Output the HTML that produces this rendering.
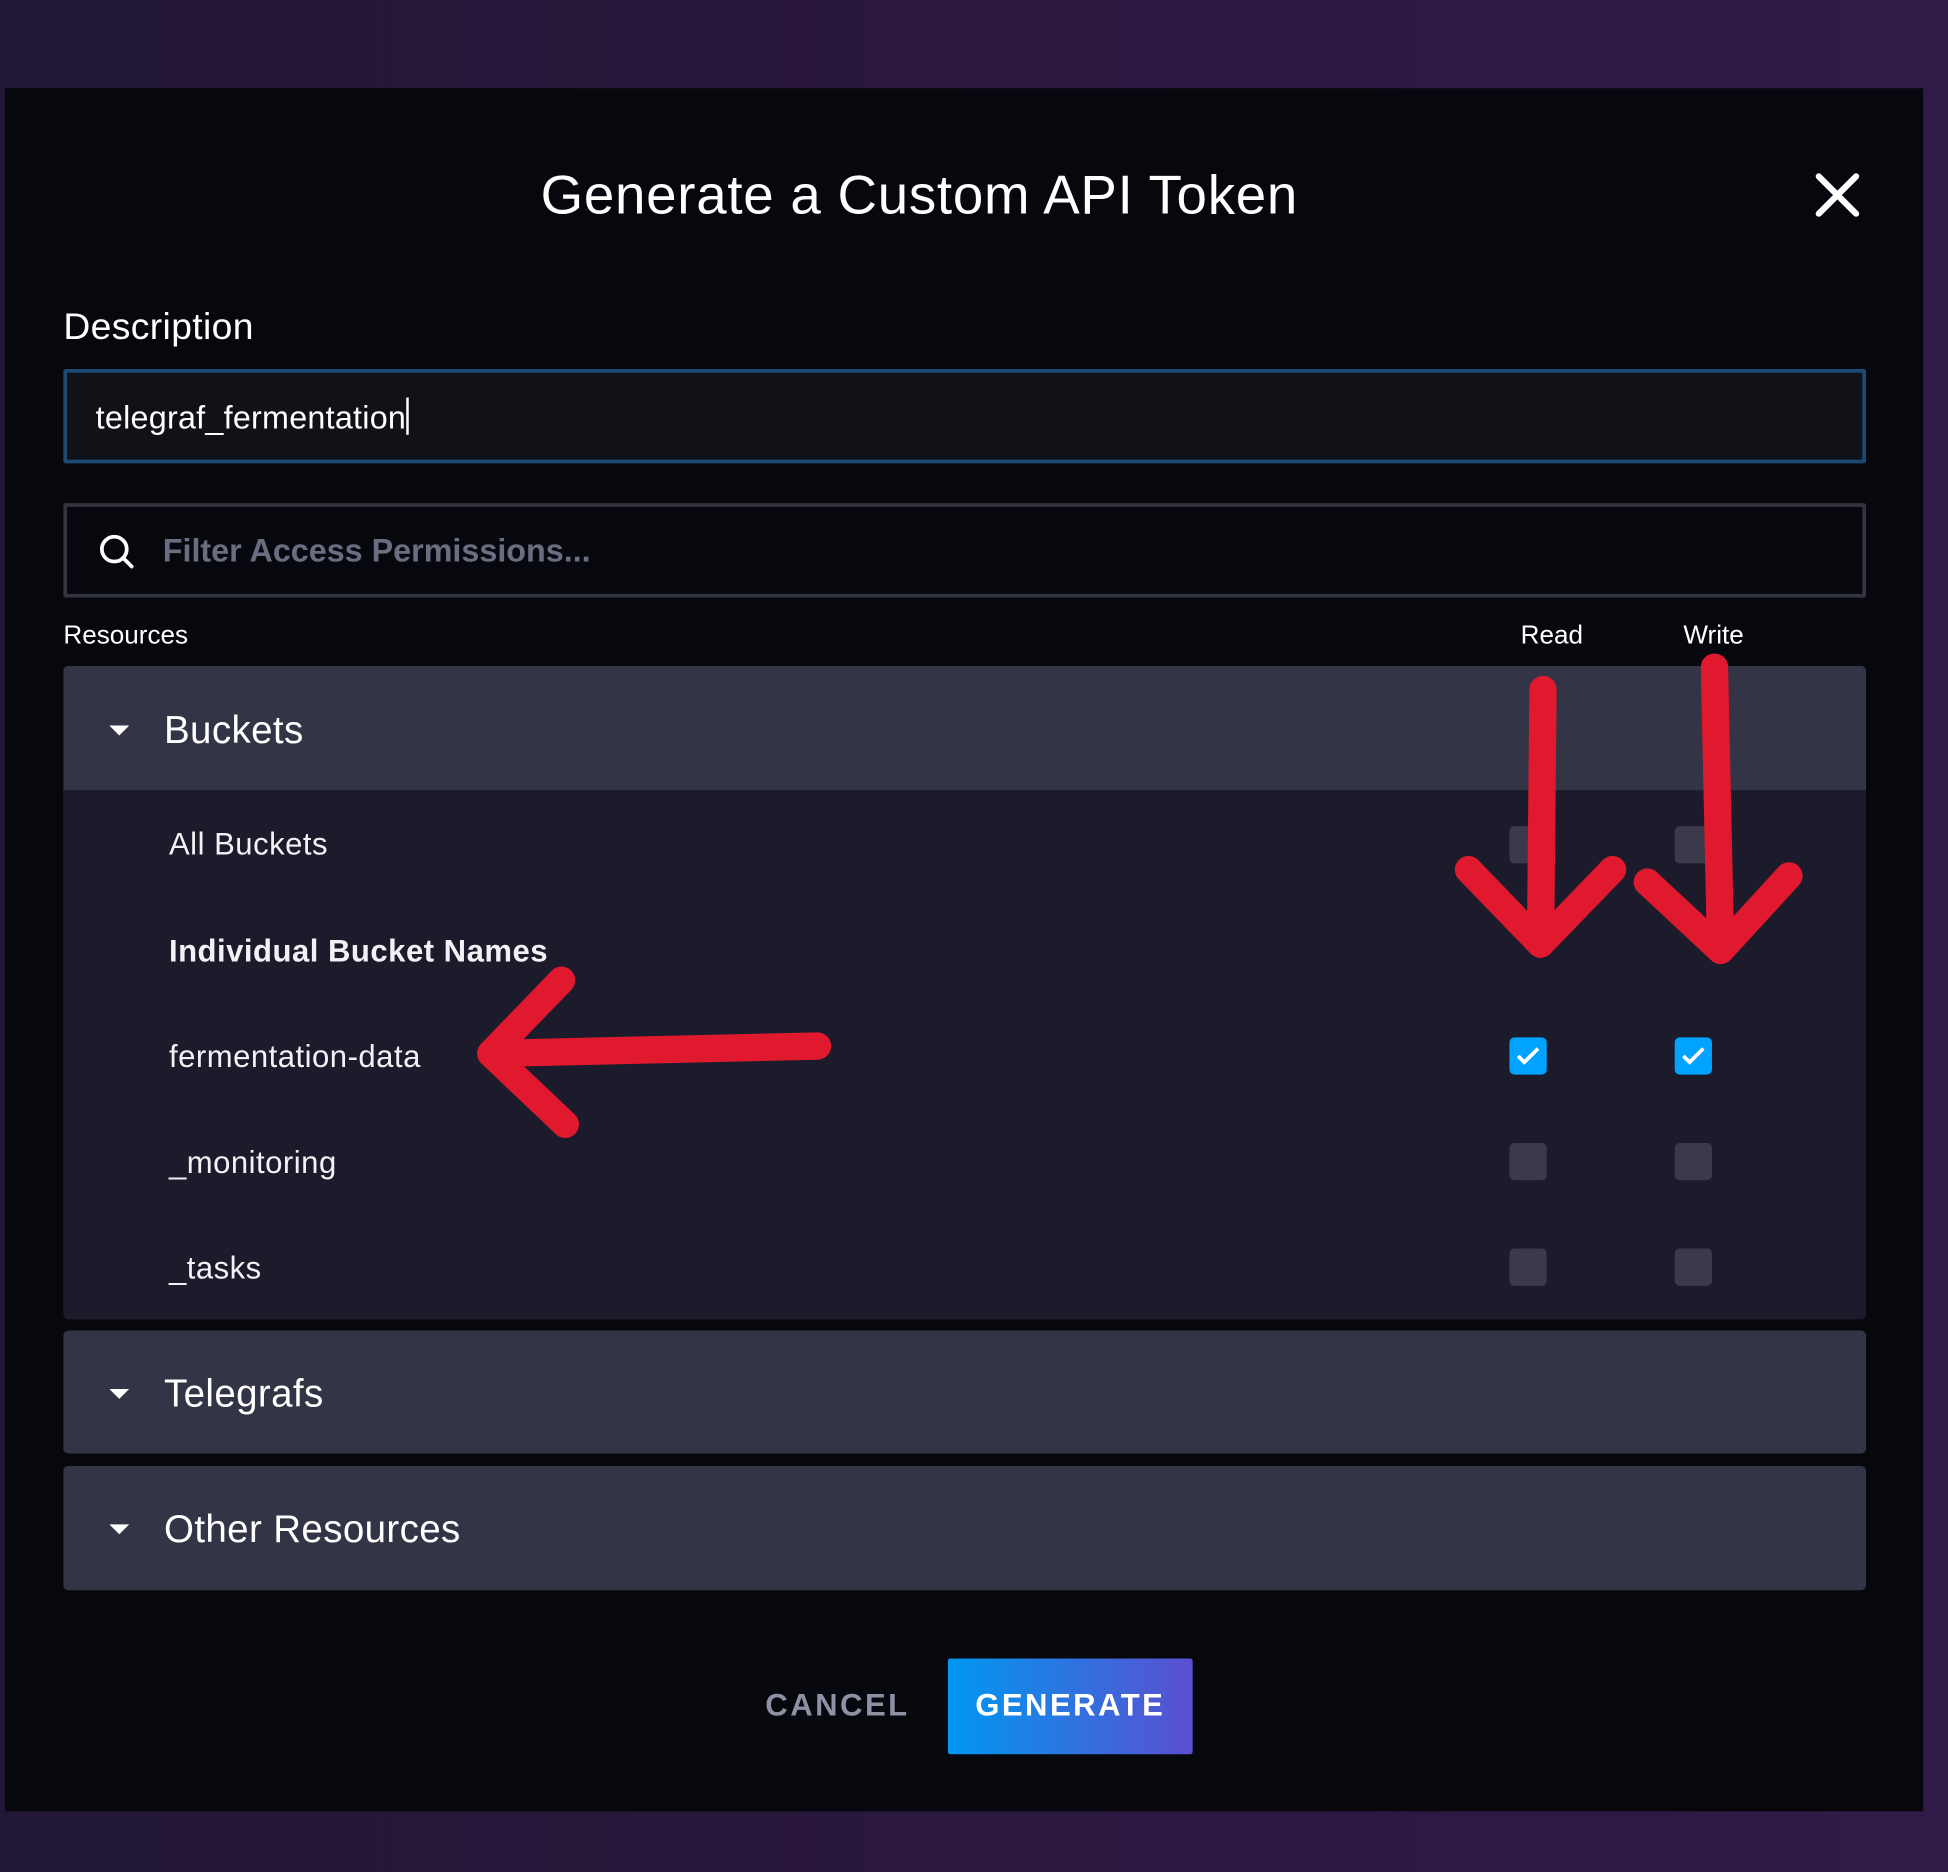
<!DOCTYPE html>
<html><head><style>
html,body{margin:0;padding:0;width:1948px;height:1872px;overflow:hidden;background:#241634;}
#w{position:absolute;left:0;top:0;width:1568px;height:1507px;transform:scale(1.24235);transform-origin:0 0;font-family:"Liberation Sans",sans-serif;color:#fff;
background:linear-gradient(90deg,#221735 0%,#2c1840 60%,#301a48 100%);}
.a{position:absolute;}
.modal{left:4px;top:71px;width:1544px;height:1387px;background:#07080d;}
.cb{position:absolute;width:30px;height:30px;border-radius:4px;background:#3a3a4a;}
.cb.on{background:#00a3ff;}
.row{position:absolute;left:136px;font-size:25px;color:#f2f2f6;letter-spacing:0.4px;}
.panel{position:absolute;left:51px;width:1451px;background:#333445;border-radius:4px;}
.tri{position:absolute;left:88px;width:0;height:0;border-left:8px solid transparent;border-right:8px solid transparent;border-top:8px solid #fff;}
.ph{position:absolute;left:132px;font-size:31px;letter-spacing:0.3px;}
</style></head><body><div id="w">
<div class="a modal"></div>
<div class="a" style="left:0;top:160px;width:1480px;text-align:center;font-size:44px;line-height:1;letter-spacing:0.6px;transform:translateY(-24px);">Generate a Custom API Token</div>
<svg class="a" style="left:1460px;top:138px" width="38" height="38"><path d="M4 4L34 34M34 4L4 34" stroke="#fff" stroke-width="5" stroke-linecap="round"/></svg>
<div class="a" style="left:51px;top:247px;font-size:30px;letter-spacing:0.3px;">Description</div>
<div class="a" style="left:51px;top:297px;width:1445px;height:70px;border:3px solid #1d4a72;background:#111217;border-radius:2px;"></div>
<div class="a" style="left:77px;top:320px;font-size:26px;letter-spacing:0.2px;">telegraf_fermentation<span style="display:inline-block;width:2px;height:30px;background:#fff;vertical-align:-5px;"></span></div>
<div class="a" style="left:51px;top:405px;width:1445px;height:70px;border:3px solid #33343f;background:#07080d;border-radius:2px;"></div>
<svg class="a" style="left:78px;top:428px" width="32" height="32"><circle cx="14" cy="14" r="10" fill="none" stroke="#fff" stroke-width="3"/><path d="M21 21L28 28" stroke="#fff" stroke-width="3" stroke-linecap="round"/></svg>
<div class="a" style="left:131px;top:428px;font-size:26px;font-weight:bold;color:#6b6d80;">Filter Access Permissions...</div>
<div class="a" style="left:51px;top:500px;font-size:21px;">Resources</div>
<div class="a" style="left:1224px;top:500px;font-size:21px;">Read</div>
<div class="a" style="left:1355px;top:500px;font-size:21px;">Write</div>
<div class="panel" style="top:536px;height:526px;background:#1c1b2b;overflow:hidden;"><div style="height:100px;background:#333445;"></div></div>
<div class="tri" style="top:584px"></div><div class="ph" style="top:570px">Buckets</div>
<div class="row" style="top:666px">All Buckets</div>
<div class="row" style="top:752px;font-weight:bold;">Individual Bucket Names</div>
<div class="row" style="top:837px">fermentation-data</div>
<div class="row" style="top:922px">_monitoring</div>
<div class="row" style="top:1007px">_tasks</div>
<div class="cb" style="left:1215px;top:665px"></div><div class="cb" style="left:1348px;top:665px"></div>
<div class="cb on" style="left:1215px;top:835px"></div><div class="cb on" style="left:1348px;top:835px"></div>
<div class="cb" style="left:1215px;top:920px"></div><div class="cb" style="left:1348px;top:920px"></div>
<div class="cb" style="left:1215px;top:1005px"></div><div class="cb" style="left:1348px;top:1005px"></div>
<svg class="a" style="left:1215px;top:835px" width="30" height="30"><path d="M7 15L12 20L23 9" stroke="#fff" stroke-width="3" fill="none"/></svg>
<svg class="a" style="left:1348px;top:835px" width="30" height="30"><path d="M7 15L12 20L23 9" stroke="#fff" stroke-width="3" fill="none"/></svg>
<div class="panel" style="top:1071px;height:99px;"></div>
<div class="tri" style="top:1118px"></div><div class="ph" style="top:1104px">Telegrafs</div>
<div class="panel" style="top:1180px;height:100px;"></div>
<div class="tri" style="top:1227px"></div><div class="ph" style="top:1213px">Other Resources</div>
<div class="a" style="left:616px;top:1359px;font-size:25px;font-weight:bold;color:#8e90a3;letter-spacing:2px;">CANCEL</div>
<div class="a" style="left:763px;top:1335px;width:197px;height:77px;background:linear-gradient(90deg,#0098f0,#5b4fd0);border-radius:2px;text-align:center;line-height:77px;font-size:25px;font-weight:bold;letter-spacing:2px;">GENERATE</div>
<svg class="a" style="left:0;top:0" width="1568" height="1507"><g stroke="#e0192f" stroke-width="22" stroke-linecap="round" stroke-linejoin="round" fill="none">
<path d="M1242 555L1240 760M1182 700L1240 760L1298 700"/>
<path d="M1380 537L1385 765M1326 710L1385 765L1440 705"/>
<path d="M658 842L395 848M452 789L395 848L455 905"/>
</g></svg>
</div></body></html>
